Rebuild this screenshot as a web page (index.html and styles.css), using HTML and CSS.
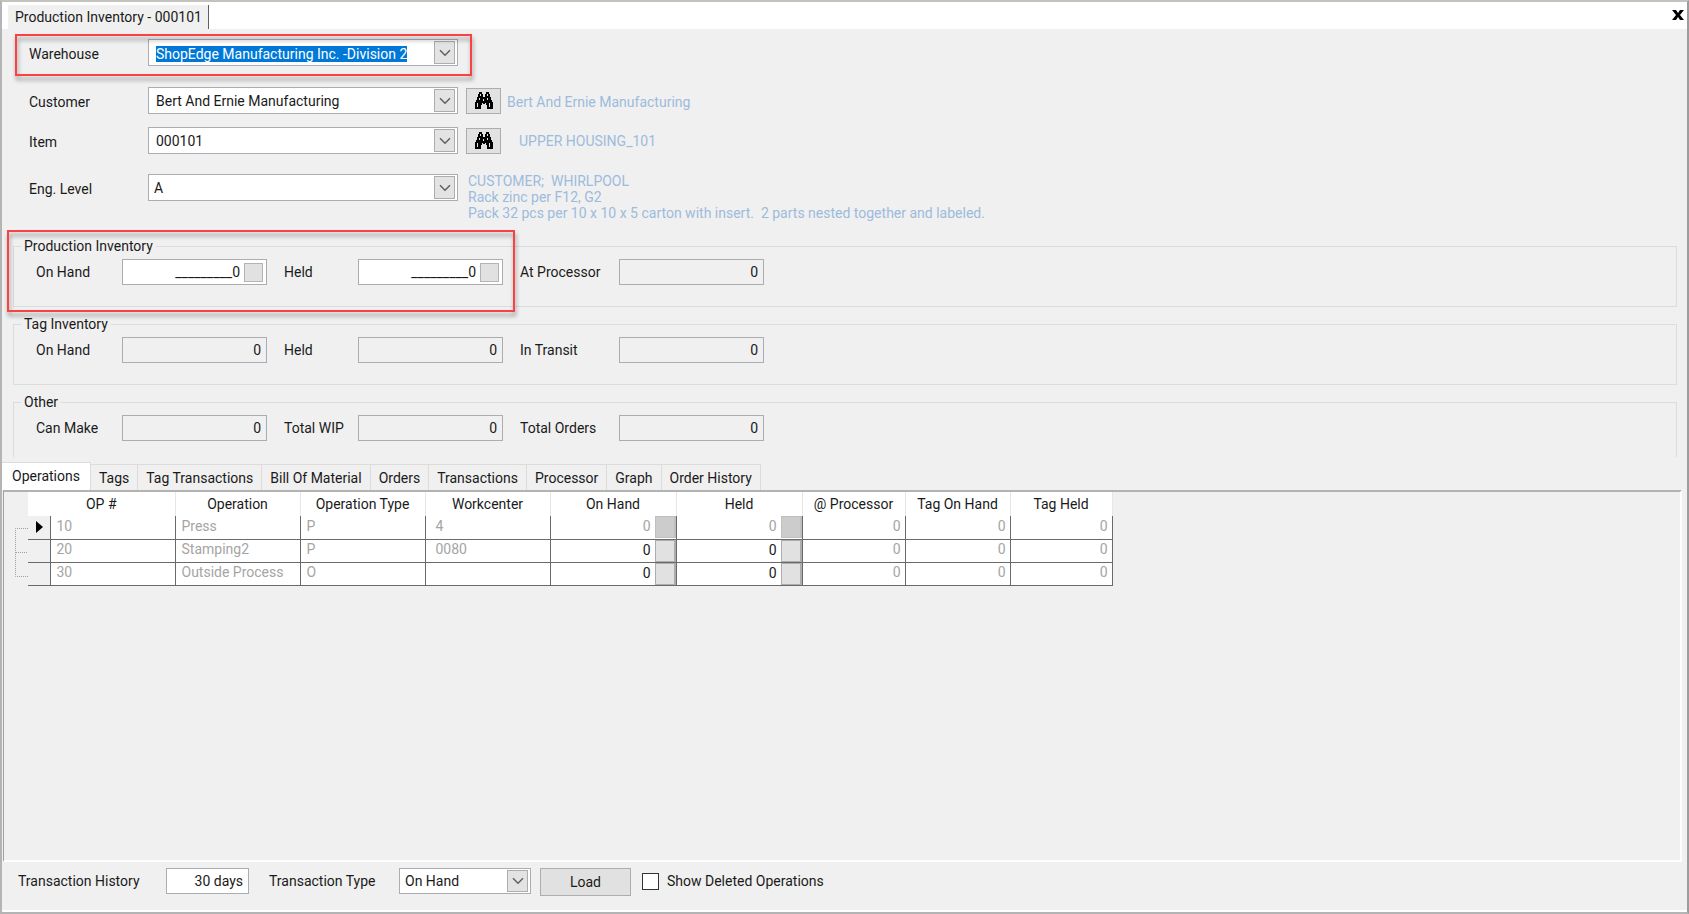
FILE: index.html
```html
<!DOCTYPE html>
<html lang="en">
<head>
<meta charset="utf-8">
<title>Production Inventory - 000101</title>
<link rel="stylesheet" href="styles.css">
</head>
<body>
<svg class="sprite" aria-hidden="true">
  <symbol id="chevron" viewBox="0 0 12 8"><path d="M1 1.2 6 6.2 11 1.2" fill="none" stroke="#606060" stroke-width="1.5"/></symbol>
  <symbol id="binoculars" viewBox="0 0 20 18"><path d="M5 0h3v2h1v3h2V2h1V0h3v2h1v3h1v3h1v2h1v7h-6v-4h-1v-2h-1v1H9v-1H8v2H7v4H1v-7h1V8h1V5h1V2h1z"/><path d="M6 2h1v2H6zM13 2h1v2h-1zM5 6h1v2H5zM3 11h1v4H3zM9 7h1v2H9zM13 6h1v2h-1zM15 11h1v4h-1z" fill="#e1e1e1"/></symbol>
</svg>
<div class="window">
  <header class="titlebar">
    <h1 class="doc-tab">Production Inventory - 000101</h1>
    <button class="close" type="button" aria-label="Close"><svg viewBox="0 0 12 10"><path d="M0 0h4l2 3 2-3h4L8 5l4 5H8L6 7l-2 3H0l4-5z"/></svg></button>
  </header>

  <form class="lookup">
    <div class="row row-warehouse">
      <label class="row-label" for="warehouse">Warehouse</label>
      <span class="combo">
        <input id="warehouse" class="combo-field" type="text" value="ShopEdge Manufacturing Inc. -Division 2">
        <span class="arrow"><svg><use href="#chevron"/></svg></span>
      </span>
      <span class="callout callout-warehouse"></span>
    </div>
    <div class="row row-customer">
      <label class="row-label" for="customer">Customer</label>
      <span class="combo">
        <select id="customer" class="combo-field"><option>Bert And Ernie Manufacturing</option></select>
        <span class="arrow"><svg><use href="#chevron"/></svg></span>
      </span>
      <button class="find" type="button" aria-label="Find customer"><svg><use href="#binoculars"/></svg></button>
      <span class="hint">Bert And Ernie Manufacturing</span>
    </div>
    <div class="row row-item">
      <label class="row-label" for="item">Item</label>
      <span class="combo">
        <select id="item" class="combo-field"><option>000101</option></select>
        <span class="arrow"><svg><use href="#chevron"/></svg></span>
      </span>
      <button class="find" type="button" aria-label="Find item"><svg><use href="#binoculars"/></svg></button>
      <span class="hint hint-item">UPPER HOUSING_101</span>
    </div>
    <div class="row row-level">
      <label class="row-label" for="level">Eng. Level</label>
      <span class="combo">
        <select id="level" class="combo-field combo-tight"><option>A</option></select>
        <span class="arrow"><svg><use href="#chevron"/></svg></span>
      </span>
      <p class="notes">CUSTOMER;  WHIRLPOOL
Rack zinc per F12, G2
Pack 32 pcs per 10 x 10 x 5 carton with insert.  2 parts nested together and labeled.</p>
    </div>
  </form>

  <div class="groups">
    <fieldset class="group">
      <legend>Production Inventory</legend>
      <div class="fields">
        <label for="p-hand">On Hand</label>
        <span class="spin"><input id="p-hand" type="text" value="_________0"><button type="button" aria-label="Edit on hand"></button></span>
        <label for="p-held">Held</label>
        <span class="spin"><input id="p-held" type="text" value="_________0"><button type="button" aria-label="Edit held"></button></span>
        <label for="p-proc">At Processor</label>
        <input id="p-proc" class="readout" type="text" value="0" readonly>
      </div>
      <span class="callout callout-production"></span>
    </fieldset>
    <fieldset class="group">
      <legend>Tag Inventory</legend>
      <div class="fields">
        <label for="t-hand">On Hand</label>
        <input id="t-hand" class="readout" type="text" value="0" readonly>
        <label for="t-held">Held</label>
        <input id="t-held" class="readout" type="text" value="0" readonly>
        <label for="t-transit">In Transit</label>
        <input id="t-transit" class="readout" type="text" value="0" readonly>
      </div>
    </fieldset>
    <fieldset class="group group-open">
      <legend>Other</legend>
      <div class="fields">
        <label for="o-make">Can Make</label>
        <input id="o-make" class="readout" type="text" value="0" readonly>
        <label for="o-wip">Total WIP</label>
        <input id="o-wip" class="readout" type="text" value="0" readonly>
        <label for="o-orders">Total Orders</label>
        <input id="o-orders" class="readout" type="text" value="0" readonly>
      </div>
    </fieldset>
  </div>

  <nav class="tabs" role="tablist">
    <button type="button" role="tab" aria-selected="true">Operations</button>
    <button type="button" role="tab">Tags</button>
    <button type="button" role="tab">Tag Transactions</button>
    <button type="button" role="tab">Bill Of Material</button>
    <button type="button" role="tab">Orders</button>
    <button type="button" role="tab">Transactions</button>
    <button type="button" role="tab">Processor</button>
    <button type="button" role="tab">Graph</button>
    <button type="button" role="tab">Order History</button>
  </nav>

  <main class="panel">
    <svg class="tree" viewBox="0 0 24 96" aria-hidden="true"><path d="M24 36.5H11.5V84.5H24M12 60.5h12" fill="none" stroke="#a0a0a0" stroke-dasharray="1 1"/></svg>
    <table class="ops">
      <colgroup><col class="c-mark"><col class="c-text"><col class="c-text"><col class="c-text"><col class="c-text"><col class="c-qty"><col class="c-qty"><col class="c-proc"><col class="c-tag"><col class="c-last"></colgroup>
      <thead>
        <tr><th colspan="2">OP #</th><th>Operation</th><th>Operation Type</th><th>Workcenter</th><th>On Hand</th><th>Held</th><th>@ Processor</th><th>Tag On Hand</th><th>Tag Held</th></tr>
      </thead>
      <tbody>
        <tr class="current"><td class="mark"><svg viewBox="0 0 7 12"><path d="M0 0 7 6 0 12z"/></svg></td><td>10</td><td>Press</td><td>P</td><td class="center-code">4</td><td class="qty"><span>0<button type="button" aria-label="Edit on hand, OP 10" disabled></button></span></td><td class="qty"><span>0<button type="button" aria-label="Edit held, OP 10" disabled></button></span></td><td class="num">0</td><td class="num">0</td><td class="num">0</td></tr>
        <tr><td class="mark"></td><td>20</td><td>Stamping2</td><td>P</td><td class="center-code">0080</td><td class="qty"><span>0<button type="button" aria-label="Edit on hand, OP 20"></button></span></td><td class="qty"><span>0<button type="button" aria-label="Edit held, OP 20"></button></span></td><td class="num">0</td><td class="num">0</td><td class="num">0</td></tr>
        <tr><td class="mark"></td><td>30</td><td>Outside Process</td><td>O</td><td class="center-code"></td><td class="qty"><span>0<button type="button" aria-label="Edit on hand, OP 30"></button></span></td><td class="qty"><span>0<button type="button" aria-label="Edit held, OP 30"></button></span></td><td class="num">0</td><td class="num">0</td><td class="num">0</td></tr>
      </tbody>
    </table>
  </main>

  <footer class="bottom">
    <label class="l-history" for="history">Transaction History</label>
    <input id="history" class="days" type="text" value="30 days">
    <label class="l-type" for="type">Transaction Type</label>
    <span class="combo combo-type">
      <select id="type" class="combo-field combo-tight"><option>On Hand</option></select>
      <span class="arrow"><svg><use href="#chevron"/></svg></span>
    </span>
    <button class="load" type="button">Load</button>
    <label class="check"><input type="checkbox">Show Deleted Operations</label>
  </footer>
</div>
<script src="script.js"></script>
</body>
</html>
```
FILE: styles.css
```css
* { box-sizing: border-box; }

body {
  margin: 0;
  background: #f0f0f0;
  color: #1a1a1a;
  font: 14px/16px Roboto, "Liberation Sans", sans-serif;
}

input, select, button { font: inherit; color: inherit; margin: 0; border-radius: 0; }
input, select { outline: none; }
p, h1, fieldset { margin: 0; padding: 0; }
h1 { font: inherit; }

.sprite { display: none; }

.window {
  display: flex;
  flex-direction: column;
  min-height: 100vh;
  border: 2px solid #b4b4b4;
  border-top-color: #c3c2bc;
  border-right-color: #9c9c9c;
}

/* Title strip */
.titlebar {
  display: flex;
  justify-content: space-between;
  height: 27px;
  padding: 3px 3px 0 6px;
  background: #fff;
}
.doc-tab {
  padding: 4px 6px 0 7px;
  background: #f0f0f0;
  border-right: 1px solid #606060;
}
.close {
  display: flex;
  width: 12px;
  padding: 5px 0 0;
  border: 0;
  background: none;
}
.close svg { width: 12px; height: 10px; }

/* Lookup rows */
.lookup { padding: 10px 0 0 27px; }
.row { position: relative; display: flex; align-items: center; height: 27px; }
.row-label { width: 119px; padding-top: 2px; }
.row-customer { margin-top: 21px; }
.row-item { margin-top: 13px; }
.row-level { margin-top: 20px; }

.combo {
  position: relative;
  display: flex;
  width: 310px;
  height: 27px;
}
.combo-field {
  width: 100%;
  height: 100%;
  padding: 0 28px 0 7px;
  border: 1px solid #abadb3;
  background: #fff;
  appearance: none;
}
.combo-tight { padding-left: 5px; }
.arrow {
  position: absolute;
  top: 2px;
  right: 3px;
  bottom: 2px;
  display: grid;
  place-items: center;
  width: 21px;
  border: 1px solid #adadad;
  background: #e3e3e3;
  pointer-events: none;
}
.arrow svg { width: 12px; height: 8px; }
#warehouse { padding-top: 2px; caret-color: transparent; }
#warehouse::selection { background: #0078d7; color: #fff; }

.find {
  display: grid;
  place-items: center;
  width: 35px;
  height: 26px;
  margin-left: 8px;
  padding: 0;
  border: 1px solid #adadad;
  background: #e1e1e1;
}
.find svg { width: 20px; height: 18px; }
.hint, .notes { color: #9dbbdc; }
.hint { margin-left: 6px; padding-top: 3px; }
.hint-item { margin-left: 18px; padding-top: 0; }
.notes { margin: 18px 0 0 10px; white-space: pre; }

.callout {
  position: absolute;
  border: 2px solid #fb4141;
  filter: drop-shadow(1px 4px 2px rgba(0, 0, 0, 0.4));
  pointer-events: none;
}
.callout-warehouse { left: -14px; top: -5px; width: 457px; height: 42px; }
.callout-production { left: -7px; top: -24px; width: 508px; height: 82px; }

/* Inventory groups */
.groups {
  display: grid;
  gap: 9px;
  padding: 37px 10px 0 11px;
}
.group {
  position: relative;
  min-width: 0;
  height: 69px;
  padding: 5px 0 0 22px;
  border: 1px solid #dcdcdc;
}
.group legend { margin-left: -15px; padding: 0 3px; line-height: 16px; }
.group-open { height: 63px; border-bottom: 0; }
.fields {
  display: grid;
  grid-template-columns: 86px 145px 91px 145px 116px 145px;
  align-items: center;
}
.fields label:nth-of-type(n + 2) { padding-left: 17px; }
.readout, .days {
  width: 100%;
  height: 26px;
  padding: 0 5px;
  border: 1px solid #abadb3;
  background: #f0f0f0;
  text-align: right;
}
.spin {
  display: flex;
  align-items: center;
  height: 26px;
  padding-right: 3px;
  border: 1px solid #abadb3;
  background: #fff;
}
.spin input {
  flex: 1;
  min-width: 0;
  padding: 0 4px 0 0;
  border: 0;
  background: none;
  text-align: right;
}
.spin button {
  width: 19px;
  height: 19px;
  padding: 0;
  border: 1px solid #b4b4b4;
  background: #e1e1e1;
}

/* Tabs */
.tabs { display: flex; align-items: flex-end; height: 28px; margin-top: 5px; }
.tabs button {
  height: 26px;
  padding: 0 8px;
  border: 1px solid #dcdcdc;
  border-left: 0;
  border-bottom: 0;
  background: #f0f0f0;
  white-space: nowrap;
}
.tabs button[aria-selected="true"] {
  height: 28px;
  padding: 0 10px 2px;
  background: #fff;
}

/* Operations panel */
.panel {
  flex: 1;
  display: flex;
  align-items: flex-start;
  margin: 0 5px 0 1px;
  border: solid;
  border-width: 2px 2px 2px 1px;
  border-color: #b2b2b2 #fdfdfd #fdfdfd #a0a0a0;
}
.tree { flex: none; width: 24px; height: 96px; }
.ops { table-layout: fixed; width: 1084px; border-collapse: collapse; }
.c-mark { width: 22px; }
.c-text { width: 125px; }
.c-qty { width: 126px; }
.c-proc { width: 103px; }
.c-tag { width: 105px; }
.c-last { width: 102px; }
.ops th {
  height: 24px;
  padding: 0;
  background: #fff;
  border-right: 1px solid #e6e6e6;
  font-weight: normal;
}
.ops td {
  height: 23px;
  padding: 0 6px 3px;
  border: 1px solid #6a6a6a;
  background: #fff;
  color: #a5a5a5;
}
.ops .current td { border-top: 0; }
.ops .mark { padding: 0 0 0 8px; border-left: 0; background: #f0f0f0; }
.mark svg { display: block; width: 7px; height: 12px; fill: #000; }
.ops .num { padding-right: 4px; text-align: right; }
.ops .center-code { padding-left: 10px; }
.ops .qty { padding: 0; color: #1a1a1a; }
.ops .current .qty { color: #a5a5a5; }
.qty span {
  display: flex;
  justify-content: flex-end;
  gap: 4px;
  height: 22px;
  line-height: 20px;
}
.qty button {
  width: 21px;
  height: 22px;
  padding: 0;
  border: 1px solid #adadad;
  border-right-width: 2px;
  background: #e1e1e1;
}
.qty button:disabled { border-color: #bfbfbf; background: #ccc; }

/* Bottom bar */
.bottom {
  display: flex;
  align-items: center;
  height: 50px;
  padding: 0 0 10px 16px;
  border-bottom: 2px solid #fdfdfd;
}
.l-history { width: 148px; }
.days { width: 83px; background: #fff; }
.l-type { width: 150px; padding-left: 20px; }
.combo-type { width: 132px; height: 26px; }
.load {
  width: 91px;
  height: 28px;
  margin: 2px 11px 0 9px;
  padding: 0;
  border: 1px solid #adadad;
  background: #e1e1e1;
}
.check { display: flex; align-items: center; gap: 8px; }
.check input {
  width: 17px;
  height: 17px;
  border: 1px solid #333;
  background: #fff;
  appearance: none;
}
.check input:checked { background: #0078d7; }
```
FILE: script.js
```js
// Start with the warehouse name selected, ready to be replaced by typing.
const warehouse = document.getElementById("warehouse");
warehouse.focus();
warehouse.select();
```
